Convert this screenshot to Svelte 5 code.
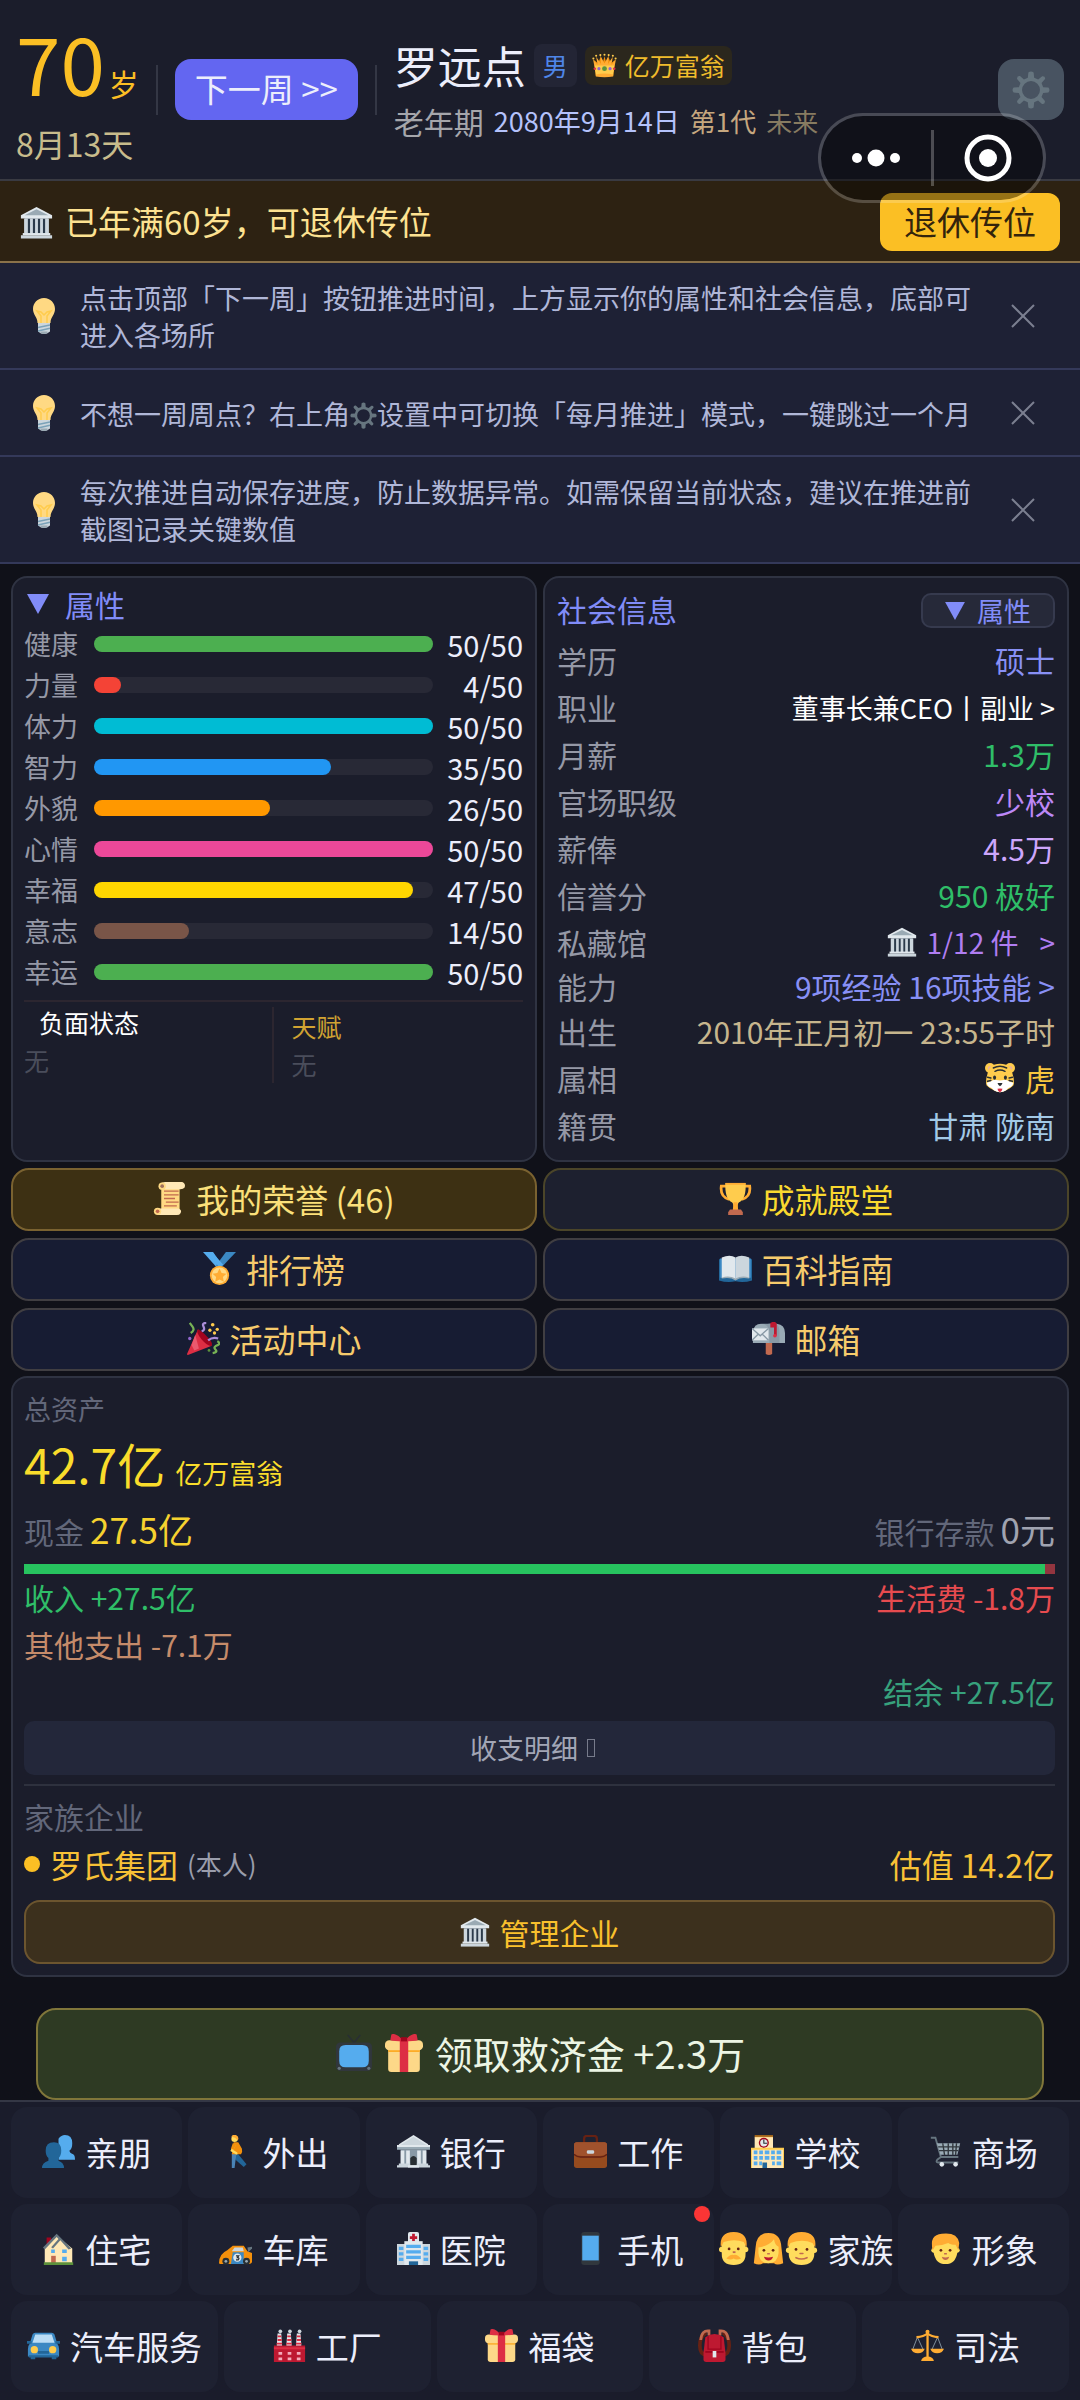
<script>
  let tips = $state([
    { id: 1, parts: ['点击顶部「下一周」按钮推进时间，上方显示你的属性和社会信息，底部可进入各场所'] },
    { id: 2, parts: ['不想一周周点？右上角', '设置中可切换「每月推进」模式，一键跳过一个月'] },
    { id: 3, parts: ['每次推进自动保存进度，防止数据异常。如需保留当前状态，建议在推进前截图记录关键数值'] }
  ]);

  const stats = [
    { name: '健康', value: 50, color: '#4caf50' },
    { name: '力量', value: 4, color: '#f44336' },
    { name: '体力', value: 50, color: '#00bcd4' },
    { name: '智力', value: 35, color: '#2196f3' },
    { name: '外貌', value: 26, color: '#ff9800' },
    { name: '心情', value: 50, color: '#ec4899' },
    { name: '幸福', value: 47, color: '#ffd600' },
    { name: '意志', value: 14, color: '#795548' },
    { name: '幸运', value: 50, color: '#4caf50' }
  ];

  const menu = [
    { icon: 'scroll', label: '我的荣誉 (46)', kind: 'honor' },
    { icon: 'trophy', label: '成就殿堂', kind: 'hall' },
    { icon: 'medal', label: '排行榜', kind: 'plain' },
    { icon: 'book', label: '百科指南', kind: 'plain' },
    { icon: 'party', label: '活动中心', kind: 'plain' },
    { icon: 'mailbox', label: '邮箱', kind: 'plain' }
  ];

  const places = [
    { icons: ['busts'], label: '亲朋' },
    { icons: ['walk'], label: '外出' },
    { icons: ['bank'], label: '银行' },
    { icons: ['briefcase'], label: '工作' },
    { icons: ['school'], label: '学校' },
    { icons: ['cart'], label: '商场' },
    { icons: ['house'], label: '住宅' },
    { icons: ['race'], label: '车库' },
    { icons: ['hospital'], label: '医院' },
    { icons: ['phone'], label: '手机', badge: true },
    { icons: ['man', 'woman', 'boy'], label: '家族' },
    { icons: ['person'], label: '形象' }
  ];

  const services = [
    { icons: ['car'], label: '汽车服务' },
    { icons: ['factory'], label: '工厂' },
    { icons: ['gift'], label: '福袋' },
    { icons: ['backpack'], label: '背包' },
    { icons: ['scales'], label: '司法' }
  ];

  const gearPath =
    'M15.5 1.5Q18-.5 20.500 1.500L21 6.500L24.800 8L28.600 4.900Q31.800 4.600 31.300 7.600L28 11.300L29.500 15.300L34.500 15.600Q36.500 18 34.500 20.400L29.500 20.800L28 24.700L31.200 28.500Q31.400 31.600 28.400 31.200L24.700 28L21 29.500L20.500 34.500Q18 36.500 15.500 34.500L15 29.500L11.300 28L7.600 31.200Q4.500 31.500 4.800 28.400L8 24.700L6.500 20.800L1.500 20.400Q-.5 18 1.500 15.600L6.500 15.300L8 11.300L4.800 7.600Q4.500 4.500 7.600 4.800L11.300 8L15 6.500ZM18 9.500A8.500 8.500 0 1 0 18 26.500A8.500 8.500 0 1 0 18 9.500Z';

  const icons = {
    museum:
      '<path fill="#7c8a94" d="M5 13h26v17H5z"/><path fill="#2b3a4a" d="M8.500 14h2.500v16H8.500zM14 14h2.500v16H14zM19.500 14H22v16h-2.500zM25 14h2.500v16H25z"/><path fill="#ccd6dd" d="M4.500 14h4v16h-4zM11 14h3v16h-3zM16.500 14h3v16h-3zM22 14h3v16h-3zM27.500 14h4v16h-4z"/><path fill="#e1e8ed" d="M18 1L35 10v3.500H1V10z"/><path fill="#9aaab4" d="M18 3.500L31 10H5z"/><path fill="#e1e8ed" d="M3 29.500h30V32H3z"/><path fill="#ccd6dd" d="M1 32h34v3.500H1z"/>',
    crown:
      '<path fill="#f4900c" d="M3 10L9 15 12 6 15.500 14 18 4.500 20.500 14 24 6 27 15 33 10 30.500 33h-25z"/><path fill="#ffac33" d="M1.500 9L8 17 6 5.500 13 16 12 3.500 18 15 24 3.500 23 16 30 5.500 28 17 34.500 9 31 27H5z"/><path fill="#ffcc4d" d="M4 18h28l-1.500 14q-12.500 3-25 0z"/><path fill="#ffac33" d="M5.500 31q12.500-3 25 0v3q-12.500 2-25 0z"/><g fill="#ffcc4d"><circle cx="2" cy="8" r="1.500"/><circle cx="6" cy="4" r="1.500"/><circle cx="12" cy="3" r="1.500"/><circle cx="18" cy="2.500" r="1.500"/><circle cx="24" cy="3" r="1.500"/><circle cx="30" cy="4" r="1.500"/><circle cx="34" cy="8" r="1.500"/></g><circle cx="18" cy="22.500" r="3.500" fill="#5c913b"/><g fill="#9266cc"><circle cx="10" cy="22.500" r="2.300"/><circle cx="26" cy="22.500" r="2.300"/></g><g fill="#dd2e44"><circle cx="4" cy="22.500" r="1.800"/><circle cx="32" cy="22.500" r="1.800"/></g>',
    gear: `<path fill="#66757f" fill-rule="evenodd" d="${gearPath}"/>`,
    bulb:
      '<path fill="#ffd983" d="M29 11.100C29 17 24.500 19 24.500 25h-13C11.500 19 7 17 7 11.100 7 5 11.500 0 18 0s11 5 11 11.100z"/><path fill="none" stroke="#ffcc4d" stroke-width="1.500" d="M15 25V18l-4-5 4 1 3 3 3-3 4-1-4 5v7"/><path fill="#ccd6dd" d="M12 25h12v8.500q-6 5-12 0z"/><path fill="none" stroke="#7ba2b8" stroke-width="1.500" d="M12 29.500l12-2.500M12 33l12-2.800"/><path fill="#9aaab4" d="M14.500 33.500h7V35q-3.500 2-7 0z"/>',
    scroll:
      '<path fill="#ffd983" d="M9 2h20v31H9z"/><path fill="#ffe8b6" d="M7 3q2-3 6-3h19q4 2 2.500 6Q33 8 30 8H13z"/><circle cx="10" cy="4.500" r="4" fill="#ffd983"/><circle cx="10" cy="4.500" r="2" fill="#a0705c"/><path fill="#ffe8b6" d="M3 29h25q4 2 2 5-1 2-4 2H5z"/><circle cx="5" cy="32" r="4" fill="#ffd983"/><circle cx="5" cy="32" r="2" fill="#c1694f"/><path stroke="#c1694f" stroke-width="1.500" d="M12 10h16M12 14h16M12 18h12M14 22h14M12 26h14"/>',
    trophy:
      '<path fill="none" stroke="#ffac33" stroke-width="3" d="M8 4.500H2.500Q1 16 11 19M28 4.500h5.500Q35 16 25 19"/><path fill="#ffcc4d" d="M7 1h22q1 17-7 21-2 1-2 8h-4q0-7-2-8Q6 18 7 1z"/><path fill="#ffac33" d="M16 22h4l1 9h-6z"/><path fill="#c1694f" d="M12 30h12l2 3v3H10v-3z"/><path fill="#ffac33" d="M7 1h22v2H7z"/>',
    medal:
      '<path fill="#55acee" d="M0 0h11l10 15-5 3z"/><path fill="#3b88c3" d="M36 0H25L14 15l5 3z"/><path fill="#55acee" d="M10 0l12 14-4 3L3 0z"/><circle cx="18" cy="25.500" r="10.500" fill="#ffac33"/><circle cx="18" cy="25.500" r="8.500" fill="#ffd983"/><path fill="#ffac33" d="M18 18l2.300 4.900 5.200.7-3.800 3.700 1 5.200L18 30l-4.700 2.500 1-5.200-3.800-3.700 5.200-.7z"/>',
    book:
      '<path fill="#226699" d="M0 8h36v23q-9 3-18 1Q9 34 0 31z"/><path fill="#3b88c3" d="M1 7h34v21H1z"/><path fill="#99aab5" d="M3 27q9-3 15 1 6-4 15-1v2q-9-2-15 2-6-4-15-2z"/><path fill="#e1e8ed" d="M3 6Q12 2 18 6v23q-7-4-15-1z"/><path fill="#ccd6dd" d="M33 6q-9-4-15 0v23q7-4 15-1z"/>',
    party:
      '<path fill="#dd2e44" d="M12 8q2 8 15 18L1 36q-1 0-1-1z"/><path fill="#a0041e" d="M12 8q-3 3 4 11t11 7q2-3-5-10T12 8z"/><path fill="#ea596e" d="M9 14l4 15-5 2-3-6z"/><path fill="none" stroke="#77b255" stroke-width="2.500" d="M4 12Q9 9 6 5T3 1M28 34q6-1 3-4t3-5q3-2-1-4"/><path fill="none" stroke="#aa8dd8" stroke-width="2.500" d="M16 10q4-1 2-5t3-4M23 20q5-4 11-2"/><g fill="#ffcc4d"><circle cx="28" cy="3" r="2"/><circle cx="33" cy="8" r="1.800"/><circle cx="25" cy="9" r="1.800"/><circle cx="30" cy="12" r="1.800"/></g><circle cx="3" cy="18" r="1.800" fill="#9266cc"/><circle cx="24" cy="31" r="1.500" fill="#5c913b"/>',
    mailbox:
      '<path fill="#c1694f" d="M15 21h7v14q-3.500 2-7 0z"/><path fill="#99aab5" d="M18 2h9q9 1 9 10v11H18z"/><path fill="#8899a6" d="M11 2h15q4 2 4 9v12H11z"/><path fill="#99aab5" d="M1 11Q2 2 10 2t9 9v12H1z"/><path fill="#e1e8ed" d="M0 7h18v13H0z"/><path fill="none" stroke="#8899a6" stroke-width="1.500" d="M0 7l9 8 9-8M0 20l7-7M18 20l-7-7"/><path fill="#be1931" d="M20 1q5-3 7 1v13h-3V6h-4z"/><circle cx="25" cy="15" r="2" fill="#dd2e44"/>',
    tiger:
      '<circle cx="6" cy="6" r="6" fill="#ffcc4d"/><circle cx="30" cy="6" r="6" fill="#ffcc4d"/><circle cx="6.500" cy="6.500" r="3" fill="#e6aaaa"/><circle cx="29.500" cy="6.500" r="3" fill="#e6aaaa"/><path fill="#ffcc4d" d="M18 1q14 0 15 12 3 9 1 14-4 4-9 6-7 4-14 0-5-2-9-6-2-5 1-14Q4 1 18 1z"/><path fill="#fff" d="M18 21l7-1 9 4q-1 5-6 6l-3 3q-7 4-14 0l-3-3q-5-1-6-6l9-4z"/><path fill="none" stroke="#292f33" stroke-width="1.800" stroke-linecap="round" d="M10 6q8-4 16 0M12 10q6-3 12 0M3 17l4 1M33 17l-4 1M3 22l4-1M33 22l-4-1"/><ellipse cx="11.500" cy="17.500" rx="1.800" ry="2.600" fill="#292f33"/><ellipse cx="24.500" cy="17.500" rx="1.800" ry="2.600" fill="#292f33"/><path fill="#292f33" d="M15 24h6q-1 3-3 4-2-1-3-4z"/><path fill="#dd2e44" d="M15 31q3-1 6 0-1 4-3 4t-3-4z"/>',
    tv:
      '<path fill="none" stroke="#292f33" stroke-width="1.500" d="M12 1l6 7 6-7"/><rect x="1" y="8" width="34" height="27" rx="4" fill="#31373d"/><path fill="#55acee" d="M10 10.500h16q6 0 6 6v9q0 6-6 6H10q-6 0-6-6v-9q0-6 6-6z"/><circle cx="4" cy="32.500" r="1.500" fill="#66757f"/><circle cx="32" cy="32.500" r="1.500" fill="#66757f"/>',
    gift:
      '<path fill="#fdd888" d="M3 14h30v19q0 3-3 3H6q-3 0-3-3z"/><path fill="#fda920" d="M3 14h30v3H3z"/><rect y="6" width="36" height="9.500" rx="4" fill="#fdd888"/><path fill="#dd2e44" d="M14 6h8v30h-8z"/><path fill="#dd2e44" d="M18 7Q10-2 6 .500L5 6q3 1 13 1zM18 7q8-9 12-6.500L31 6q-3 1-13 1z"/><path fill="#a0041e" d="M15 3h6v4h-6z"/>',
    busts:
      '<path fill="#55acee" d="M25 0q8 0 8 9 0 6-3 8 0 3 4 4 2 1 2 6H18V4q3-4 7-4z"/><path fill="#269" d="M13 8q8 0 8 9 0 6-3 8v3q6 2 6 8H0q0-6 7-8v-3q-3-2-3-8 0-9 9-9z"/>',
    walk:
      '<path fill="#269" d="M16 20l5 1 9 11-3 3-9-8z"/><path fill="#4a83b5" d="M14 20h5l-1 8-1 8h-3z"/><path fill="#f4900c" d="M16 8h5l4 7q1 4-1 6H14z"/><path fill="none" stroke="#ffdc5d" stroke-width="2.500" stroke-linecap="round" d="M17 11l-3 6 5 3"/><path fill="#f4900c" d="M15 9l4 1-3 6-3-1z"/><circle cx="17" cy="4" r="3.500" fill="#ffdc5d"/><path fill="#ffac33" d="M13.500 2q1-3 5-2 4 2 2 6l-3-3z"/>',
    bank:
      '<path fill="#8899a6" d="M4 16h28v17H4z"/><path fill="#e1e8ed" d="M18 0L34 10v2H2v-2z"/><path fill="#ccd6dd" d="M18 2L32 11H4z"/><path fill="#99aab5" d="M0 12h36v4H0z"/><path fill="#e1e8ed" d="M0 11h36v2H0zM4 17h4v15H4zM10 17h4v15h-4zM22 17h4v15h-4zM28 17h4v15h-4z"/><path fill="#ccd6dd" d="M2 31h32v2H2zM0 33h36v2.500H0z"/><path fill="#292f33" d="M14.500 33v-8q3.500-4 7 0v8z"/><path fill="#e1e8ed" d="M12 33h12v2.500H12z"/>',
    briefcase:
      '<path fill="none" stroke="#662113" stroke-width="2.500" d="M11 9V4q0-3 3-3h8q3 0 3 3v5"/><rect y="8" width="36" height="28" rx="3" fill="#964b1e"/><path fill="#a0522d" d="M3 8h30q3 0 3 3v10q-18 5-36 0V11q0-3 3-3z"/><path fill="none" stroke="#662113" stroke-width="1.500" d="M0 21q3 3 7 3h22q4 0 7-3"/><rect x="14" y="16.500" width="8" height="4" rx="1.500" fill="#ccd6dd"/>',
    school:
      '<path fill="#ffe8b6" d="M4 2h20v34H4z"/><path fill="#f4900c" opacity=".6" d="M4 0h20v2.500H4z"/><path fill="#ffcc4d" d="M0 14h36v22H0z"/><path fill="#ffe8b6" d="M1 16h34v20H1z"/><path fill="#55acee" d="M3 17h4v4H3zM9 17h4v4H9zM15 17h5v4h-5zM22 17h4v4h-4zM28 17h5v4h-5zM3 23h4v4H3zM9 23h4v4H9zM15 23h5v4h-5zM22 23h4v4h-4zM28 23h5v4h-5zM3 29h4v4H3zM9 29h3v4H9zM23 29h3v4h-3zM28 29h5v4h-5z"/><path fill="#269" d="M12.500 30h5v6h-5z"/><circle cx="14" cy="8.500" r="5.500" fill="#a0041e"/><circle cx="14" cy="8.500" r="4" fill="#e1e8ed"/><path stroke="#292f33" stroke-width="1.200" fill="none" d="M14 5v4h3.500"/>',
    cart:
      '<path fill="none" stroke="#66757f" stroke-width="2" d="M2 3h5l6 21h19M13 24l-4 3q-2 3 1 3h22"/><path fill="#99aab5" d="M8.500 9H34l-3 12.500H12.500z"/><path stroke="#31373d" stroke-width="1.500" d="M10 13h23M11 17h21M15 9l2 13M21 9v13M26 9v13M30 9l-1 13"/><circle cx="14" cy="32" r="2.500" fill="#e1e8ed"/><circle cx="29" cy="32" r="2.500" fill="#e1e8ed"/>',
    house:
      '<path fill="#a0041e" d="M5 6h5v8H5z"/><path fill="#ffe8b6" d="M3 18L16 4l17 14v17H3z"/><path fill="#66757f" d="M16 2L1 17l2 2L16 5.500l2 2-8 9 2 1.500 8-9 9 10 3-1z"/><path fill="#55acee" d="M10 19h4v4h-4zM22 19h5v4h-5zM22 27h5v5h-5z"/><path fill="#c1694f" d="M10 26h5v8h-5z"/><path fill="#5c913b" d="M2 33h32v3H2z"/>',
    race:
      '<path fill="#f4900c" d="M0 34q0-10 9-14l6-5h12l4 6 5 2v10q-1 2-3 2H1z"/><path fill="#66757f" d="M31 17l5-1v2l-4 4z"/><path fill="#ccd6dd" d="M17 17h9l1 4H14z"/><path fill="#3b88c3" d="M15 22h12v13H13z"/><circle cx="20" cy="28" r="4.500" fill="#e1e8ed"/><path fill="none" stroke="#292f33" stroke-width="1.300" d="M18.500 26h3l-1.500 2q3 0 1 2.500h-2.500"/><circle cx="7.500" cy="32" r="3.800" fill="#292f33"/><circle cx="30" cy="32" r="3.800" fill="#292f33"/><circle cx="7.500" cy="32" r="1.500" fill="#99aab5"/><circle cx="30" cy="32" r="1.500" fill="#99aab5"/>',
    hospital:
      '<rect x="12" width="12" height="12" rx="2" fill="#e1e8ed"/><path fill="#be1931" d="M16.500 2h3v2.500H22v3h-2.500V10h-3V7.500H14v-3h2.500z"/><path fill="#ccd6dd" d="M0 13h36v23H0z"/><path fill="#e1e8ed" d="M8 10h20v26H8z"/><path fill="#55acee" d="M10 14h16v3.500H10zM10 20h16v3.500H10zM10 26h16v3.500H10zM2 16h5v3.500H2zM2 22h5v3.500H2zM2 28h5v3.500H2zM29 16h5v3.500h-5zM29 22h5v3.500h-5zM29 28h5v3.500h-5z"/><path fill="#269" d="M13 32h10v4H13z"/>',
    phone:
      '<rect x="8" width="20" height="36" rx="3" fill="#31373d"/><path fill="#55acee" d="M9 4h18v27H9z"/>',
    man:
      '<circle cx="3" cy="19" r="3" fill="#ffdc5d"/><circle cx="29" cy="19" r="3" fill="#ffdc5d"/><path fill="#ffdc5d" d="M3 12q0-10 13-10t13 10v12q0 12-13 12T3 24z"/><path fill="#ffac33" d="M2 17Q0 0 16 0t14 17l-3-6q-10-4-22 0z"/><circle cx="11" cy="18.500" r="1.500" fill="#662113"/><circle cx="21" cy="18.500" r="1.500" fill="#662113"/><path fill="#c1694f" d="M15 21h3v2h-3z"/><path fill="#ffac33" d="M16 25q4-1 8 4-5 2-8 0-3 2-8 0 4-5 8-4z"/>',
    woman:
      '<path fill="#ffac33" d="M18 1q13 0 14 15l2 18q-7 3-10 0H12q-4 3-10 0l2-18Q5 1 18 1z"/><path fill="#ffdc5d" d="M7 17q12-2 17-9 1 7 5 8v7q-1 11-11 11T7 23z"/><circle cx="13" cy="20" r="1.500" fill="#662113"/><circle cx="23" cy="20" r="1.500" fill="#662113"/><path fill="#be1931" d="M13 27q5 1.500 10 0-1 4-5 4t-5-4z"/><path fill="#c1694f" d="M16.500 23h3v1.500h-3z"/>',
    boy:
      '<circle cx="4" cy="20" r="3" fill="#ffdc5d"/><circle cx="32" cy="20" r="3" fill="#ffdc5d"/><path fill="#ffdc5d" d="M4 12Q4 2 18 2t14 10v11q0 13-14 13T4 23z"/><path fill="#ffac33" d="M3 17Q1 0 18 0t15 17l-3-5q-11-5-24 0z"/><circle cx="12" cy="19" r="1.500" fill="#662113"/><circle cx="24" cy="19" r="1.500" fill="#662113"/><path fill="none" stroke="#c1694f" stroke-width="1.800" stroke-linecap="round" d="M16.500 23.500h3M12 28q6 3 12 0"/>',
    person:
      '<circle cx="5" cy="20" r="2.500" fill="#ffdc5d"/><circle cx="31" cy="20" r="2.500" fill="#ffdc5d"/><path fill="#ffdc5d" d="M5 13Q8 4 18 4t13 9v9q-2 13-13 13T5 22z"/><path fill="#ffac33" d="M4 20Q0 3 14 2q17-2 19 10l-1 8-3-6q-6 0-8-2-7 3-14 3z"/><circle cx="13" cy="20" r="1.500" fill="#662113"/><circle cx="23" cy="20" r="1.500" fill="#662113"/><path fill="#c1694f" d="M16.500 23h3v1.500h-3zM14 27q4 1.500 8 0-1 3.500-4 3.500T14 27z"/>',
    car:
      '<path fill="#3b88c3" d="M9 4h18q2 0 3 2l3 10q2 2 2 6v8H1v-8q0-4 2-6L6 6q1-2 3-2z"/><path fill="#269" d="M0 13h5v3H0zM31 13h5v3h-5zM4 30h5v3H4zM27 30h5v3h-5z"/><path fill="#bbddf5" d="M9 6h18l3 9H6z"/><circle cx="8" cy="22.500" r="4" fill="#ffcc4d"/><circle cx="28" cy="22.500" r="4" fill="#ffcc4d"/><path fill="#269" d="M12 24h12v3H12zM2 28.500h32V31H2z"/>',
    factory:
      '<path fill="#e1e8ed" d="M5 5h4l1 15H4zM15.500 5h4l1 15h-6zM26 5h4l1 15h-6z"/><path stroke="#dd2e44" stroke-width="2" d="M5 8h4M5 12h4.500M4 16h6M15.500 8h4M15.500 12h4.500M14.500 16h6M26 8h4M26 12h4.500M25 16h6"/><g fill="#ccd6dd"><circle cx="8" cy="2.500" r="2"/><circle cx="18.500" cy="2.500" r="2"/><circle cx="29" cy="2.500" r="2"/></g><path fill="#be1931" d="M1 18h34v18H1z"/><path fill="#dd2e44" d="M1 20h34v2H1z"/><path fill="#f4abba" d="M6 25h4v3H6zM16 25h4v3h-4zM26 25h4v3h-4zM6 31h4v3H6zM16 31h4v3h-4zM26 31h4v3h-4z"/>',
    backpack:
      '<path fill="none" stroke="#662113" stroke-width="4" d="M9 4q-7 4-7 14t7 10M27 4q7 4 7 14t-7 10"/><path fill="none" stroke="#c1694f" stroke-width="3" d="M3 12Q4 1 12 2v5M33 12Q32 1 24 2v5"/><path fill="#be1931" d="M8 9q10-7 20 0l2 17v7q0 3-3 3H9q-3 0-3-3v-7z"/><path fill="#a0041e" d="M8 24h20v2H8z"/><path fill="none" stroke="#a0041e" stroke-width="1.500" d="M11 8v14h14V8"/><path fill="#e1e8ed" d="M16 24h4v7h-4z"/>',
    scales:
      '<path fill="none" stroke="#8899a6" stroke-width="1" d="M7 9L2 22M7 9l6 13M29 9l-6 13M29 9l5 13"/><path fill="#ffac33" d="M16.800 2h2.500v29h-2.500z"/><path fill="none" stroke="#ffac33" stroke-width="2.500" d="M6 9q8-1 12-4 4 3 12 4"/><circle cx="18" cy="3" r="2.200" fill="#ffac33"/><path fill="#ffac33" d="M0 21.500h15q-2 5-7.500 5T0 21.500zM21 21.500h15q-2 5-7.500 5T21 21.500zM11 35q1-5 7-5t7 5z"/>'
  };

  function dismiss(id) {
    tips = tips.filter((tip) => tip.id !== id);
  }
</script>

{#snippet icon(name)}
  <svg class="icon" viewBox="0 0 36 36" aria-hidden="true">{@html icons[name]}</svg>
{/snippet}

{#snippet triangle()}
  <svg class="triangle" viewBox="0 0 22 20" aria-hidden="true"><path d="M0 0h22L11 20z" /></svg>
{/snippet}

{#snippet cell(item)}
  <button class="cell">
    <span class="cell-icons">{#each item.icons as name}{@render icon(name)}{/each}</span>
    <span>{item.label}</span>
    {#if item.badge}<i class="dot"></i>{/if}
  </button>
{/snippet}

<div class="app">
  <header>
    <div class="age">
      <div class="years"><strong>70</strong><span>岁</span></div>
      <div class="days">8月13天</div>
    </div>
    <i class="rule"></i>
    <button class="next">下一周 &gt;&gt;</button>
    <i class="rule"></i>
    <div class="who">
      <div class="name-row">
        <h1>罗远点</h1>
        <span class="tag male">男</span>
        <span class="tag rich">{@render icon('crown')}亿万富翁</span>
      </div>
      <div class="era-row">
        <span class="stage">老年期</span>
        <span class="date">2080年9月14日</span>
        <span class="gen">第1代</span>
        <span class="era">未来</span>
      </div>
    </div>
    <button class="settings" aria-label="设置">{@render icon('gear')}</button>
  </header>

  <div class="capsule">
    <button aria-label="更多">
      <svg width="48" height="18" viewBox="0 0 48 18"><circle cx="5" cy="9" r="5" /><circle cx="24" cy="9" r="8.500" /><circle cx="43" cy="9" r="5" /></svg>
    </button>
    <i></i>
    <button aria-label="关闭">
      <svg width="48" height="48" viewBox="0 0 48 48"><circle class="ring" cx="24" cy="24" r="21" /><circle cx="24" cy="24" r="9" /></svg>
    </button>
  </div>

  <section class="retire">
    {@render icon('museum')}
    <span>已年满60岁，可退休传位</span>
    <button>退休传位</button>
  </section>

  {#each tips as tip (tip.id)}
    <section class="tip">
      {@render icon('bulb')}
      <p>{#each tip.parts as part, i}{#if i > 0}{@render icon('gear')}{/if}{part}{/each}</p>
      <button aria-label="关闭提示" onclick={() => dismiss(tip.id)}>
        <svg width="24" height="24" viewBox="0 0 24 24"><path d="M1 1l22 22M23 1L1 23" /></svg>
      </button>
    </section>
  {/each}

  <main>
    <div class="pair">
      <section class="card stats">
        <button class="stats-title">{@render triangle()}属性</button>
        {#each stats as stat}
          <div class="stat">
            <span class="label">{stat.name}</span>
            <div class="track"><div class="fill" style:width="{(stat.value / 50) * 100}%" style:background={stat.color}></div></div>
            <span class="value">{stat.value}/50</span>
          </div>
        {/each}
        <div class="traits">
          <div class="trait debuff">
            <h3>负面状态</h3>
            <p>无</p>
          </div>
          <div class="trait talent">
            <h3>天赋</h3>
            <p>无</p>
          </div>
        </div>
      </section>

      <section class="card social">
        <div class="social-head">
          <h2>社会信息</h2>
          <button>{@render triangle()}属性</button>
        </div>
        <dl>
          <div><dt>学历</dt><dd class="indigo">硕士</dd></div>
          <div><dt>职业</dt><dd><button class="job">董事长兼CEO丨副业 &gt;</button></dd></div>
          <div><dt>月薪</dt><dd class="green">1.3万</dd></div>
          <div><dt>官场职级</dt><dd class="violet">少校</dd></div>
          <div><dt>薪俸</dt><dd class="lilac">4.5万</dd></div>
          <div><dt>信誉分</dt><dd class="green">950 极好</dd></div>
          <div><dt>私藏馆</dt><dd><button class="museum">{@render icon('museum')}<span>1/12 件</span><span>&gt;</span></button></dd></div>
          <div class="tight"><dt>能力</dt><dd><button class="indigo">9项经验 16项技能 &gt;</button></dd></div>
          <div><dt>出生</dt><dd class="sand">2010年正月初一 23:55子时</dd></div>
          <div><dt>属相</dt><dd class="amber zodiac">{@render icon('tiger')}虎</dd></div>
          <div><dt>籍贯</dt><dd class="sky">甘肃 陇南</dd></div>
        </dl>
      </section>
    </div>

    <nav class="menu">
      {#each menu as item}
        <button class={item.kind}>{@render icon(item.icon)}{item.label}</button>
      {/each}
    </nav>

    <section class="card assets">
      <h2>总资产</h2>
      <div class="total"><strong>42.7亿</strong><span>亿万富翁</span></div>
      <div class="cash">
        <div>现金<b class="gold">27.5亿</b></div>
        <div>银行存款<b>0元</b></div>
      </div>
      <div class="flow-bar"><i></i></div>
      <div class="flow"><span class="income">收入 +27.5亿</span><span class="living">生活费 -1.8万</span></div>
      <div class="flow"><span class="other">其他支出 -7.1万</span></div>
      <div class="flow end"><span class="balance">结余 +27.5亿</span></div>
      <button class="detail">收支明细<i></i></button>
      <div class="company">
        <h2>家族企业</h2>
        <div class="company-row">
          <i></i><b>罗氏集团</b><small>(本人)</small><span>估值 14.2亿</span>
        </div>
        <button class="manage">{@render icon('museum')}管理企业</button>
      </div>
    </section>

    <button class="relief">{@render icon('tv')}{@render icon('gift')}<span>领取救济金 +2.3万</span></button>
  </main>

  <footer>
    <div class="grid six">{#each places as item}{@render cell(item)}{/each}</div>
    <div class="grid five">{#each services as item}{@render cell(item)}{/each}</div>
  </footer>
</div>

<style>
  :global(body) {
    background: #101119;
  }
  .app {
    position: relative;
    font-family: 'Noto Sans CJK SC', 'Noto Sans', sans-serif;
    font-size: 30px;
    color: #eceefb;
    background: #101119;
  }
  .app * {
    box-sizing: border-box;
  }
  h1, h2, h3, p, dl, dd {
    margin: 0;
    font-size: inherit;
    font-weight: 400;
  }
  strong, b {
    font-weight: 400;
  }
  button {
    margin: 0;
    padding: 0;
    border: 0;
    background: none;
    color: inherit;
    font: inherit;
    white-space: nowrap;
    cursor: pointer;
  }
  .icon {
    flex: none;
    width: 1em;
    height: 1em;
  }
  .triangle {
    flex: none;
    fill: #818cf8;
  }

  header {
    display: flex;
    align-items: center;
    gap: 17px;
    padding: 16px;
    background: #1b1d2b;
    border-bottom: 2px solid #393a42;
  }
  .years {
    display: flex;
    align-items: baseline;
    gap: 4px;
    height: 91px;
    line-height: 91px;
    color: #fbbf24;
  }
  .years strong {
    font-size: 80px;
  }
  .years span {
    font-size: 30px;
  }
  .days {
    margin-top: 16px;
    font-size: 32px;
    line-height: 40px;
    color: #c8bc8c;
  }
  .rule {
    width: 2px;
    height: 50px;
    background: #343745;
  }
  .next {
    height: 61px;
    padding: 0 20px 3px;
    border-radius: 16px;
    background: #6366f1;
    font-size: 33px;
    line-height: 58px;
  }
  .who {
    flex: 1;
  }
  .name-row {
    display: flex;
    align-items: center;
    gap: 8px;
    height: 56px;
  }
  h1 {
    font-size: 44px;
    line-height: 56px;
  }
  .tag {
    display: flex;
    align-items: center;
    gap: 8px;
    border-radius: 8px;
    font-size: 25px;
    line-height: 38px;
  }
  .male {
    height: 43px;
    padding: 0 9px;
    background: #232535;
    color: #4f86e8;
  }
  .rich {
    height: 39px;
    padding: 0 7px;
    background: #2b271d;
    color: #f0bc2c;
  }
  .era-row {
    display: flex;
    align-items: center;
    gap: 10px;
    margin-top: 7px;
    font-size: 26px;
    line-height: 42px;
  }
  .stage {
    font-size: 30px;
    color: #a5a6ab;
  }
  .date {
    font-size: 27px;
    color: #b4c2fb;
  }
  .gen {
    color: #c6a77f;
  }
  .era {
    color: #877b61;
  }
  .settings {
    display: flex;
    align-items: center;
    justify-content: center;
    width: 66px;
    height: 61px;
    border-radius: 16px;
    background: #485361;
    font-size: 38px;
  }

  .capsule {
    position: absolute;
    top: 113px;
    right: 34px;
    display: flex;
    align-items: center;
    width: 228px;
    height: 90px;
    border: 3px solid rgba(255, 255, 255, 0.2);
    border-radius: 45px;
    background: rgba(0, 0, 0, 0.4);
    background-clip: padding-box;
  }
  .capsule button {
    display: flex;
    flex: 1;
    align-items: center;
    justify-content: center;
  }
  .capsule i {
    width: 3px;
    height: 56px;
    background: rgba(255, 255, 255, 0.25);
  }
  .capsule svg {
    fill: #fff;
  }
  .capsule .ring {
    fill: none;
    stroke: #fff;
    stroke-width: 5;
  }

  .retire {
    display: flex;
    align-items: center;
    gap: 12px;
    padding: 12px 20px 10px;
    border-bottom: 2px solid #8a724a;
    background: #2d2212;
    color: #fde291;
    font-size: 33px;
    line-height: 54px;
  }
  .retire span {
    padding-bottom: 3px;
  }
  .retire button {
    height: 58px;
    margin-left: auto;
    padding: 0 24px 3px;
    border-radius: 12px;
    background: #fbbf24;
    color: #33240c;
  }

  .tip {
    display: flex;
    align-items: center;
    gap: 18px;
    padding: 16px 29px 15px 26px;
    border-bottom: 2px solid #34395a;
    background: #1e2135;
    color: #b0b7d8;
    font-size: 27px;
    line-height: 37px;
  }
  .tip > .icon {
    font-size: 36px;
  }
  .tip p {
    flex: 1;
  }
  .tip p .icon {
    vertical-align: -4px;
  }
  .tip button {
    display: flex;
    align-items: center;
    justify-content: center;
    width: 56px;
    height: 54px;
    margin-left: 4px;
  }
  .tip button path {
    stroke: #7b7f90;
    stroke-width: 2;
  }

  main {
    display: flex;
    flex-direction: column;
    padding: 12px 11px 0;
  }
  .card {
    border: 2px solid #2f3342;
    border-radius: 16px;
    background: #1b1d2b;
  }
  .pair,
  .menu {
    display: grid;
    grid-template-columns: repeat(2, minmax(0, 1fr));
    gap: 7px 6px;
  }
  .stats {
    padding: 7px 12px 8px 11px;
  }
  .stats-title {
    display: flex;
    align-items: center;
    gap: 16px;
    height: 38px;
    padding-left: 3px;
    color: #818cf8;
    font-size: 30px;
    line-height: 36px;
  }
  .triangle {
    width: 22px;
    height: 20px;
  }
  .stat {
    display: flex;
    align-items: center;
    height: 41px;
    line-height: 40px;
  }
  .stat .label {
    width: 70px;
    color: #9598a6;
    font-size: 27px;
  }
  .track {
    flex: 1;
    height: 16px;
    border-radius: 8px;
    background: #282936;
  }
  .fill {
    height: 100%;
    border-radius: 8px;
  }
  .stat .value {
    width: 90px;
    text-align: right;
    font-size: 29px;
  }
  .traits {
    display: grid;
    grid-template-columns: repeat(2, minmax(0, 1fr));
    margin-top: 8px;
    padding-top: 5px;
    border-top: 2px solid #2c2630;
    font-size: 25px;
    line-height: 38px;
  }
  .trait p {
    color: #4a4d5b;
  }
  .debuff {
    border-right: 2px solid #2c2630;
  }
  .debuff h3 {
    padding: 0 0 4px 15px;
    color: #fff;
    line-height: 30px;
  }
  .talent {
    padding-left: 18px;
  }
  .talent h3 {
    color: #d1a332;
  }

  .social {
    padding: 15px 12px 12px;
  }
  .social-head {
    display: flex;
    align-items: center;
    justify-content: space-between;
    height: 35px;
    margin-bottom: 8px;
    color: #818cf8;
    line-height: 30px;
  }
  .social-head h2 {
    padding-bottom: 4px;
    font-size: 30px;
  }
  .social-head button {
    display: flex;
    align-items: center;
    gap: 12px;
    height: 35px;
    padding: 0 22px;
    border: 2px solid #363a4e;
    border-radius: 10px;
    background: #262939;
    font-size: 27px;
    line-height: 30px;
  }
  .social-head .triangle {
    width: 20px;
    height: 18px;
  }
  dl > div {
    display: flex;
    align-items: center;
    justify-content: space-between;
    height: 47px;
    line-height: 44px;
    white-space: nowrap;
  }
  dl > .tight {
    height: 42px;
  }
  dt {
    color: #9598a6;
  }
  .job {
    color: #fff;
    font-size: 27px;
  }
  .museum,
  .zodiac {
    display: flex;
    align-items: center;
    gap: 10px;
  }
  .museum {
    color: #b07df2;
  }
  .museum span {
    font-size: 28px;
  }
  .museum span + span {
    margin-left: 11px;
  }
  .indigo { color: #8890f5; }
  .green { color: #2fbe68; }
  .violet { color: #bd88f7; }
  .lilac { color: #cda6fb; }
  .sand { color: #c6b58d; }
  .amber { color: #f8c63e; }
  .sky { color: #a2c9e6; }

  .menu {
    margin: 6px 0 5px;
  }
  .menu button {
    display: flex;
    align-items: center;
    justify-content: center;
    gap: 10px;
    height: 63px;
    padding-bottom: 2px;
    border: 2px solid #403e42;
    border-radius: 18px;
    background: #171c33;
    color: #f6cb6c;
    font-size: 33px;
    line-height: 56px;
  }
  .menu .honor {
    border-color: #7a6230;
    background: #3d3013;
    color: #fbe07a;
  }
  .menu .hall {
    border-color: #4b4529;
    background: #1d202f;
    color: #f9d92f;
  }

  .assets {
    padding: 11px 12px 11px 11px;
  }
  .assets h2 {
    color: #62677a;
    font-size: 27px;
    line-height: 39px;
  }
  .total {
    display: flex;
    align-items: baseline;
    gap: 10px;
    height: 70px;
    line-height: 70px;
    color: #f9dc2b;
  }
  .total strong {
    font-size: 48px;
  }
  .total span {
    font-size: 27px;
  }
  .cash {
    display: flex;
    justify-content: space-between;
    height: 66px;
    line-height: 62px;
    color: #62677a;
  }
  .cash div {
    display: flex;
    align-items: baseline;
    gap: 6px;
  }
  .cash b {
    color: #a0a3b0;
    font-size: 35px;
  }
  .cash .gold {
    color: #f6d22f;
  }
  .flow-bar {
    height: 10px;
    background: #93353f;
  }
  .flow-bar i {
    display: block;
    width: 99%;
    height: 100%;
    background: #27c35f;
  }
  .flow {
    display: flex;
    justify-content: space-between;
    line-height: 47px;
  }
  .flow.end {
    justify-content: flex-end;
  }
  .income { color: #2fbe68; }
  .living { color: #e74b4f; }
  .other { color: #c58b6a; }
  .balance { color: #37a17c; }
  .detail {
    display: flex;
    align-items: center;
    justify-content: center;
    gap: 9px;
    width: 100%;
    height: 54px;
    margin: 6px 0 9px;
    border-radius: 10px;
    background: #23273a;
    color: #a2a6b6;
    font-size: 27px;
    line-height: 50px;
  }
  .detail i {
    width: 8px;
    height: 18px;
    margin-right: 14px;
    border: 1px solid #777b8b;
  }
  .company {
    padding-top: 6px;
    border-top: 2px solid #2e313e;
  }
  .company h2 {
    font-size: 30px;
    line-height: 48px;
  }
  .company-row {
    display: flex;
    align-items: center;
    height: 48px;
    color: #f8c136;
    font-size: 32px;
    line-height: 48px;
  }
  .company-row i {
    width: 16px;
    height: 16px;
    margin-right: 10px;
    border-radius: 50%;
    background: #fbbf24;
  }
  .company-row small {
    margin-left: 9px;
    color: #9a9dac;
    font-size: 26px;
  }
  .company-row span {
    margin-left: auto;
  }
  .manage {
    display: flex;
    align-items: center;
    justify-content: center;
    gap: 10px;
    width: 100%;
    height: 64px;
    margin-top: 12px;
    border: 2px solid #6c552f;
    border-radius: 16px;
    background: #3c301d;
    color: #f9c02d;
    line-height: 58px;
  }
  .relief {
    display: flex;
    align-items: center;
    justify-content: center;
    gap: 12px;
    height: 92px;
    margin: 31px 25px 0;
    padding-bottom: 3px;
    border: 2px solid #80763a;
    border-radius: 20px;
    background: #2e3a23;
    color: #ecf5e4;
    font-size: 38px;
    line-height: 84px;
  }

  footer {
    display: grid;
    gap: 6px;
    padding: 5px 11px 8px;
    border-top: 2px solid #343745;
    background: #1a1c2b;
  }
  .grid {
    display: grid;
    gap: 6px;
  }
  .six {
    grid-template-columns: repeat(6, minmax(0, 1fr));
  }
  .five {
    grid-template-columns: repeat(5, minmax(0, 1fr));
  }
  .cell {
    position: relative;
    display: flex;
    align-items: center;
    justify-content: center;
    gap: 10px;
    height: 91px;
    padding-bottom: 2px;
    border-radius: 16px;
    background: #1e2131;
    font-size: 33px;
    line-height: 88px;
  }
  .cell-icons {
    display: flex;
  }
  .dot {
    position: absolute;
    top: 2px;
    right: 4px;
    width: 16px;
    height: 16px;
    border-radius: 50%;
    background: #fb3535;
  }
</style>
